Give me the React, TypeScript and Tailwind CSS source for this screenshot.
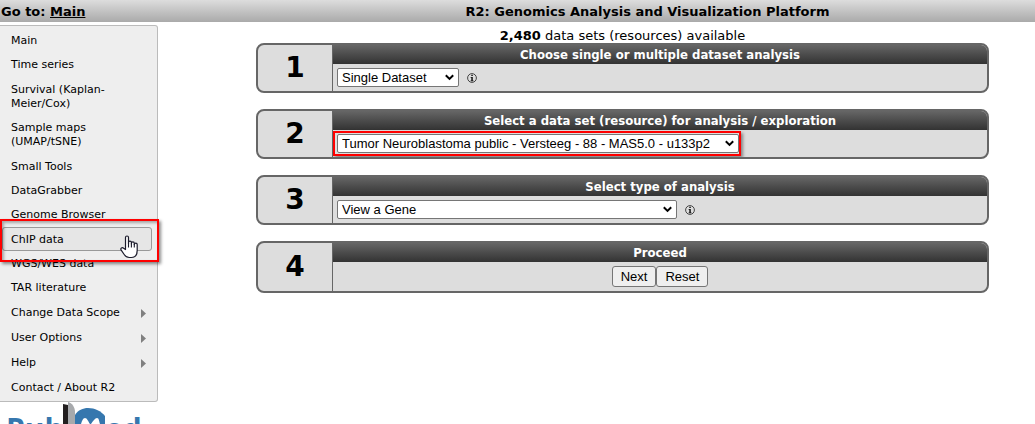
import type { ReactNode } from "react";

type Item = { label: string; submenu?: boolean; active?: boolean };

const groups: Item[][] = [
  [{ label: "Main" }, { label: "Time series" }],
  [{ label: "Survival (Kaplan-Meier/Cox)" }, { label: "Sample maps (UMAP/tSNE)" }],
  [{ label: "Small Tools" }, { label: "DataGrabber" }, { label: "Genome Browser" }],
  [{ label: "ChIP data", active: true }, { label: "WGS/WES data" }, { label: "TAR literature" }],
  [{ label: "Change Data Scope", submenu: true }],
  [{ label: "User Options", submenu: true }],
  [{ label: "Help", submenu: true }],
  [{ label: "Contact / About R2" }],
];

function HandCursor() {
  return (
    <svg className="absolute left-[118px] top-[8px] z-20" width="19" height="24" viewBox="0 0 19 24" aria-hidden="true">
      <path
        d="M5.5 14.5V2.5a1.5 1.5 0 0 1 3 0V8.5V7.5a1.4 1.4 0 0 1 2.9 0V9V8.4a1.4 1.4 0 0 1 2.9 0V9.6a1.3 1.3 0 0 1 2.9 0V15.5c0 4-2 7-6 7h-2c-2.5 0-4-1.5-5-3L1.2 15.2c-1.2-2 1-3.3 2.4-2z"
        fill="#fff"
        stroke="#1c1c2c"
        strokeWidth="1.2"
        strokeLinejoin="round"
      />
      <path d="M8.5 8v4.5M11.4 8.5v4M14.3 9v3.5" stroke="#1c1c2c" strokeWidth="1.1" fill="none" />
    </svg>
  );
}

function MenuItem({ label, submenu, active }: Item) {
  return (
    <li className="relative">
      <a
        href="#"
        className={
          active
            ? "flex items-center rounded-[3px] border border-[#999] bg-[#e6e6e6] pb-[3px] pl-[8px] pr-[5px] pt-[5px]"
            : "flex items-center border border-transparent pb-[3px] pl-[8px] pr-[5px] pt-[5px]"
        }
      >
        <span className="flex-1">{label}</span>
        {submenu && (
          <svg width="5" height="9" viewBox="0 0 5 9" aria-hidden="true">
            <path d="M0 0l5 4.5L0 9z" fill="#808080" />
          </svg>
        )}
      </a>
      {active && (
        <>
          <div className="pointer-events-none absolute -left-[2px] -right-[7px] -top-[8px] z-10 h-[43px] border-2 border-[#f00] shadow-[2px_2px_3px_rgba(0,0,0,0.45),inset_2px_2px_3px_rgba(0,0,0,0.3)]" />
          <HandCursor />
        </>
      )}
    </li>
  );
}

function Logo() {
  return (
    <svg className="block h-[22px] w-[150px]" viewBox="0 0 150 22" role="img" aria-label="PubMed">
      <g fill="#3677ae" fontFamily="Open Sans, sans-serif" fontWeight="700" fontSize="30">
        <text x="6" y="38">Pub</text>
        <text x="105" y="38">ed</text>
      </g>
      <path d="M75 22V13c3-5 8-7 13-7 7 0 13 3 17 8v8z" fill="#3677ae" />
      <path d="M81 22c1-3 2-6 4-6s3 3 5 6zM91 22c2-3 4-6 6-6s2 3 3 6z" fill="#fff" />
      <path d="M63 2l5 1v19h-5z" fill="#231f20" />
      <path d="M68 0c4 1 7 5 7 10v12h-7z" fill="#a7a9ac" />
    </svg>
  );
}

function Select({ label, width, children }: { label: string; width: string; children: ReactNode }) {
  return (
    <div className={"relative " + width}>
      <select
        aria-label={label}
        className="block h-[19px] w-full appearance-none rounded-[2px] border border-[#767676] bg-white pl-[4px] font-['Liberation_Sans',Arial,sans-serif] text-[13px] leading-[17px] text-black"
      >
        {children}
      </select>
      <svg className="pointer-events-none absolute right-[5px] top-[6px]" width="9" height="7" viewBox="0 0 9 7" aria-hidden="true">
        <path d="M0.8 1.2l3.7 3.7 3.7-3.7" fill="none" stroke="#000" strokeWidth="2" />
      </svg>
    </div>
  );
}

function Info() {
  return (
    <svg className="ml-[8px]" width="10" height="10" viewBox="0 0 10 10" role="img" aria-label="Info">
      <circle cx="5" cy="5" r="4.4" fill="none" stroke="#333" strokeWidth="0.9" />
      <path d="M4.3 1.8h1.5v1.3H4.3zM3.6 4h2.2v3.4h.7v.8H3.6v-.8h.7V4.8h-.7z" fill="#111" />
    </svg>
  );
}

function Step({ n, title, children }: { n: number; title: string; children: ReactNode }) {
  return (
    <section className="flex overflow-hidden rounded-[8px] border-2 border-[#666] bg-[#ddd]">
      <div className="flex w-[75px] shrink-0 items-center justify-center border-r border-[#666] text-[28px] font-bold leading-[32px]">
        {n}
      </div>
      <div className="flex-1">
        <h2 className="h-[19px] bg-linear-to-b from-[#666] to-[#333] text-center font-['DejaVu_Sans_Condensed','DejaVu_Sans',sans-serif] text-[13px] font-bold leading-[19px] text-white">
          {title}
        </h2>
        <div className="flex items-center p-[4px]">{children}</div>
      </div>
    </section>
  );
}

const button =
  "h-[21px] rounded-[3px] border border-[#767676] bg-[#efefef] px-[8px] font-['Liberation_Sans',Arial,sans-serif] text-[13px] leading-[19px]";

export default function App() {
  return (
    <div className="overflow-hidden bg-white font-['DejaVu_Sans',Verdana,sans-serif] text-black">
      <header className="flex h-[22px] bg-linear-to-b from-[#ddd] to-[#aaa] text-[13px] font-bold leading-[23px]">
        <div className="w-[260px] pl-px">
          Go to: <a href="#" className="underline">Main</a>
        </div>
        <h1 className="flex-1 text-center">R2: Genomics Analysis and Visualization Platform</h1>
      </header>
      <div className="flex items-start pt-[3px]">
        <aside className="w-[158px] shrink-0">
          <nav className="rounded-r-[3px] border border-l-0 border-[#bbb] bg-[#eee] py-[2px] pl-[2px] pr-[5px] text-[11px] leading-[14px]">
            <div className="flex flex-col gap-px">
              {groups.map((g) => (
                <ul key={g[0].label}>
                  {g.map((item) => (
                    <MenuItem key={item.label} {...item} />
                  ))}
                </ul>
              ))}
            </div>
          </nav>
          <Logo />
        </aside>
        <main className="ml-[98px] mr-[46px] flex-1">
          <p className="h-[18px] text-center text-[13px] leading-[21px]">
            <b>2,480</b> data sets (resources) available
          </p>
          <form className="flex flex-col gap-[16px]">
            <Step n={1} title="Choose single or multiple dataset analysis">
              <Select label="Single or multiple dataset" width="w-[122px]">
                <option>Single Dataset</option>
              </Select>
              <Info />
            </Step>
            <Step n={2} title="Select a data set (resource) for analysis / exploration">
              <div className="relative">
                <Select label="Data set" width="w-[402px]">
                  <option>Tumor Neuroblastoma public - Versteeg - 88 - MAS5.0 - u133p2</option>
                </Select>
                <div className="pointer-events-none absolute -inset-y-[3px] -left-[4px] -right-[2px] border-2 border-[#f00] shadow-[2px_2px_3px_rgba(0,0,0,0.4)]" />
              </div>
            </Step>
            <Step n={3} title="Select type of analysis">
              <Select label="Type of analysis" width="w-[340px]">
                <option>View a Gene</option>
              </Select>
              <Info />
            </Step>
            <Step n={4} title="Proceed">
              <div className="flex flex-1 justify-center">
                <button type="button" className={button}>Next</button>
                <button type="reset" className={button}>Reset</button>
              </div>
            </Step>
          </form>
        </main>
      </div>
    </div>
  );
}
